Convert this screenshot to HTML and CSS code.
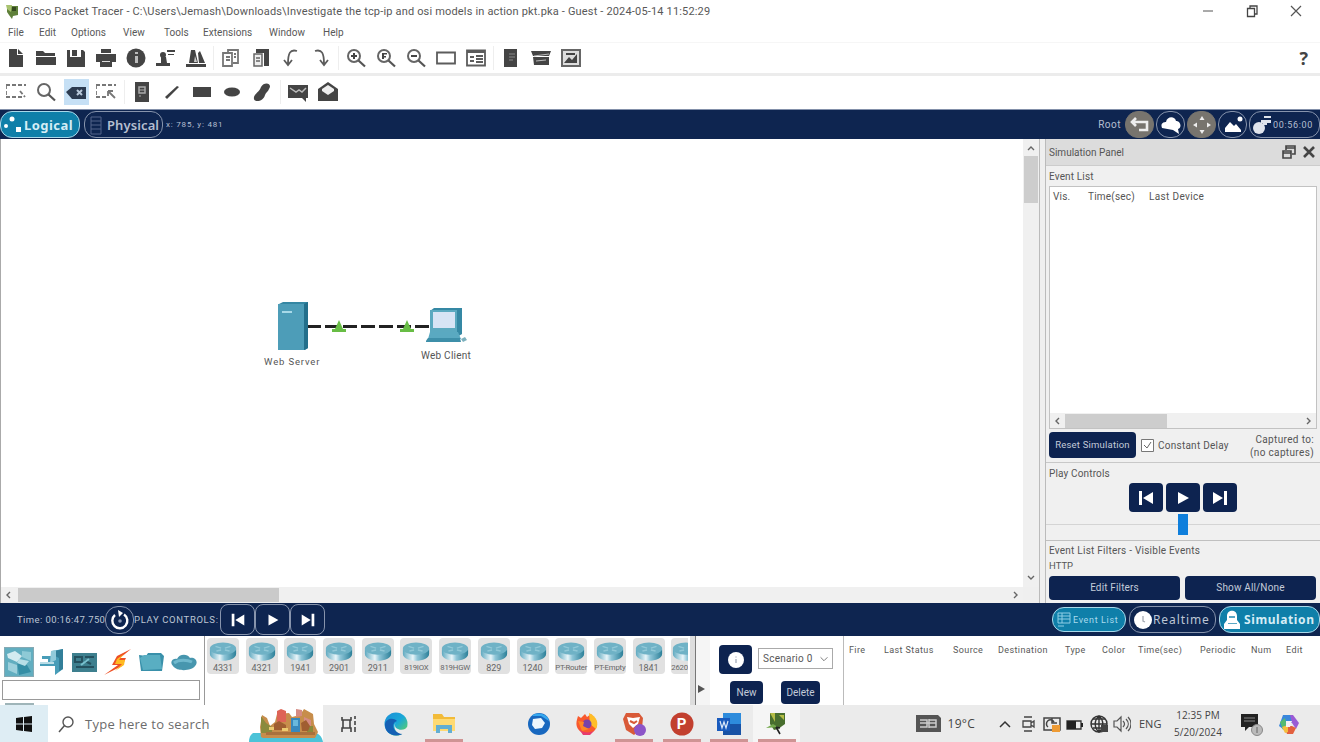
FILE: index.html
```html
<!DOCTYPE html>
<html lang="en">
<head>
<meta charset="utf-8">
<title>Cisco Packet Tracer</title>
<link rel="stylesheet" href="styles.css">
</head>
<body>
<svg class="defs" width="0" height="0">
  <defs>
    <linearGradient id="rt" x1="0" x2="1"><stop offset="0" stop-color="#5fa9c0"/><stop offset=".38" stop-color="#e9f5f9"/><stop offset=".55" stop-color="#8fc6d8"/><stop offset="1" stop-color="#2c8099"/></linearGradient>
    <linearGradient id="edge" x1="0" x2="1" y2="1"><stop offset="0" stop-color="#1c8fd8"/><stop offset=".5" stop-color="#1aa8d8"/><stop offset="1" stop-color="#6edb4a"/></linearGradient>
    <symbol id="router" viewBox="0 0 32 22"><path d="M2 9v5c0 10 28 10 28 0V9z" fill="url(#rt)"/><ellipse cx="16" cy="8.500" rx="14" ry="6.500" fill="#6fb2c6"/><path d="M8 6l6 2M24 6l-6 2M9 11l5-1M23 11l-5-1" stroke="#92c9d8" stroke-width="1.500"/></symbol>
    <symbol id="prev" viewBox="0 0 20 20"><path d="M3 3h3v14H3zM17 4v12L7 10z" fill="#fff"/></symbol>
    <symbol id="play" viewBox="0 0 20 20"><path d="M5 4l11 6-11 6z" fill="#fff"/></symbol>
    <symbol id="next" viewBox="0 0 20 20"><path d="M14 3h3v14h-3zM3 4v12l10-6z" fill="#fff"/></symbol>
    <symbol id="lens" viewBox="0 0 20 20"><circle cx="8" cy="8" r="6" fill="none" stroke="#666" stroke-width="2"/><path d="M12.500 12.500l6.500 6" stroke="#555" stroke-width="2.200"/></symbol>
  </defs>
</svg>
<div class="window">
  <header class="titlebar">
    <svg class="logo" width="16" height="16" viewBox="0 0 16 16"><path d="M3 2h11v9l-5 1-1 3-3-4-2-3z" fill="#5f803a"/><path d="M2 1h6l-1 7-4-3z" fill="#a8c270"/><path d="M8 3h4v4H8z" fill="#34491f"/></svg>
    <span class="title">Cisco Packet Tracer - C:\Users\Jemash\Downloads\Investigate the tcp-ip and osi models in action pkt.pka - Guest - 2024-05-14 11:52:29</span>
    <div class="winbtns">
      <svg viewBox="0 0 14 14"><path d="M2 7h10" stroke="#555"/></svg>
      <svg viewBox="0 0 14 14"><path d="M2.500 4.500h7v8h-7zM5 4V2h7v8h-2" fill="none" stroke="#444" stroke-width="1.300"/></svg>
      <svg viewBox="0 0 14 14"><path d="M2 2l10 10M12 2L2 12" stroke="#555" stroke-width="1.200"/></svg>
    </div>
  </header>
  <nav class="menu"><span>File</span><span>Edit</span><span>Options</span><span>View</span><span>Tools</span><span>Extensions</span><span>Window</span><span>Help</span></nav>

  <div class="tools first">
    <i><svg viewBox="0 0 20 20"><path d="M3 1h8v6h6v12H3z"/><path d="M12 1l5 5h-5z"/></svg></i>
    <i><svg viewBox="0 0 20 20"><path d="M0 3h7l2 2h10v3H0zM0 9h20v8H0z"/></svg></i>
    <i><svg viewBox="0 0 20 20"><path d="M1 2h3v7h11V2h2l2 2v15H1z"/><path d="M6 2h5v6H6z"/></svg></i>
    <i><svg viewBox="0 0 20 20"><path d="M5 1h10v4H5zM0 6h20v8H0zM4 13h12v6H4z"/><path d="M6 13h8v1H6z" fill="#ddd"/></svg></i>
    <i><svg viewBox="0 0 20 20"><circle cx="10" cy="10" r="9.500"/><path d="M9 8h3v7H9zM9 4h3v2H9z" fill="#bbb"/></svg></i>
    <i><svg viewBox="0 0 20 20"><circle cx="7" cy="7" r="3"/><path d="M5 9h5l1 6h3v3H0v-3h5zM11 2h8v2h-8zM12 6h6v1h-6z"/></svg></i>
    <i><svg viewBox="0 0 20 20"><path d="M0 16h20v3H0zM3 15L5 2h4l3 13zM12 5l2-2 5 12h-6z"/><path d="M9 8l2 6H8z" fill="#ccc"/></svg></i>
    <b></b>
    <i><svg viewBox="0 0 20 20" class="line soft"><path d="M2 5h9v13H2zM7 5V2h10v13h-5M5 9h4M5 12h4M13 6h2M13 9h2"/></svg></i>
    <i><svg viewBox="0 0 20 20"><path d="M5 1h13v17h-5V5H5z"/><path d="M3 6h8v12H3zM5 10h4M5 13h4" fill="#eee" stroke="#666" stroke-width="1.500"/></svg></i>
    <i><svg viewBox="0 0 20 20" class="line"><path d="M16 3C9 1 7 5 7 16M3 12l4 5 4-5"/></svg></i>
    <i><svg viewBox="0 0 20 20" class="line"><path d="M4 3c7-2 9 2 9 13M9 12l4 5 4-5"/></svg></i>
    <b></b>
    <i><svg viewBox="0 0 20 20"><use href="#lens"/><path d="M5 7h6v2H5zM7 5h2v6H7z"/></svg></i>
    <i><svg viewBox="0 0 20 20"><use href="#lens"/><path d="M6 5h2v6H6zM8 5h3v1.500H8zM8 8h2v1.500H8z"/></svg></i>
    <i><svg viewBox="0 0 20 20"><use href="#lens"/><path d="M5 7h6v2H5z"/></svg></i>
    <i><svg viewBox="0 0 20 20" class="line"><path d="M1 4.500h18v11H1z"/></svg></i>
    <i><svg viewBox="0 0 20 20" class="line"><path d="M1 2.500h18v15H1zM1 4h18"/><path d="M4 9h4M4 13h4M10 8h7M10 11h7M10 14h7"/></svg></i>
    <b></b>
    <i><svg viewBox="0 0 20 20"><path d="M3 1h13v18H3z"/><path d="M8 6h6M8 9h6M8 12h4" stroke="#888"/></svg></i>
    <i><svg viewBox="0 0 20 20"><path d="M0 3h20l-2 5H2zM2 9h16v8H3z"/><path d="M3 8l15-2M5 13l10-1" stroke="#bbb"/></svg></i>
    <i><svg viewBox="0 0 20 20"><path d="M1 2h18v16H1z" fill="#ddd" stroke="#666" stroke-width="2"/><path d="M3 15l5-6 3 3 5-6v9zM5 5h9v2H5z"/></svg></i>
    <span class="help">?</span>
  </div>
  <div class="tools second">
    <i><svg viewBox="0 0 20 20" class="line soft"><path d="M0 3h20M0 3v12M0 15h16M14 9l5 6" stroke-dasharray="4 2"/></svg></i>
    <i><svg viewBox="0 0 20 20"><use href="#lens"/></svg></i>
    <i class="sel"><svg viewBox="0 0 20 20"><path d="M0 10l6-5h14v12H6z" fill="#2c3b50"/><path d="M11 8l5 5M16 8l-5 5" stroke="#b9c9da" stroke-width="2"/></svg></i>
    <i><svg viewBox="0 0 20 20" class="line soft"><path d="M0 3h20M0 3v12h11" stroke-dasharray="4 2"/><path d="M12 9l7 7M12 9v5M12 9h5"/></svg></i>
    <b></b>
    <i><svg viewBox="0 0 20 20"><path d="M3 0h14v20H3z"/><path d="M7 5h6v6H7z" fill="none" stroke="#aaa" stroke-width="1.500"/><path d="M7 8h6M7 14h2" stroke="#aaa"/></svg></i>
    <i><svg viewBox="0 0 20 20"><path d="M3 15L15 4l2 1L5 17z"/></svg></i>
    <i><svg viewBox="0 0 20 20"><path d="M1 5h18v10H1z"/></svg></i>
    <i><svg viewBox="0 0 20 20"><ellipse cx="10" cy="10" rx="8" ry="4.500"/></svg></i>
    <i><svg viewBox="0 0 20 20"><path d="M9 5c3-6 12-4 8 2-1 3-3 3-4 6-1 6-10 8-11 4-1-5 5-6 7-12z"/></svg></i>
    <b></b>
    <i><svg viewBox="0 0 20 20"><path d="M0 3h20v13h-2v4l-4-4H0z"/><path d="M2 6l6 4 3-2 3 2 4-4" fill="none" stroke="#bbb" stroke-width="1.500"/></svg></i>
    <i><svg viewBox="0 0 20 20"><path d="M0 7l10-7 10 7v12H0z"/><path d="M4 7l6-4 6 4v2l-6 4-6-4z" fill="#eee"/></svg></i>
  </div>

  <div class="viewbar">
    <div class="pill logical on"><svg width="20" height="20" viewBox="0 0 20 20" fill="#fff"><circle cx="4" cy="11" r="2"/><circle cx="10" cy="4" r="2.500"/><path d="M14 12h5v5h-5z"/></svg><span>Logical</span></div>
    <div class="pill physical"><svg width="17" height="20" viewBox="0 0 17 20"><path d="M5 2h10v17H5zM5 6h10M5 10h10M5 14h10" fill="none" stroke="#52658a"/></svg><span>Physical</span></div>
    <span class="xy">x: 785, y: 481</span>
    <span class="root">Root</span>
    <i class="rnd gray"><svg viewBox="0 0 20 20"><path d="M6 3L2 7l4 4M2 7h15v8H9" fill="none" stroke="#eee" stroke-width="2.600"/></svg></i>
    <i class="rnd"><svg viewBox="0 0 20 20"><path d="M1 13c-2-5 2-6 4-6 1-6 9-6 10-1 5 0 6 7 2 8l1 5-6-4z" fill="#fff"/></svg></i>
    <i class="rnd gray"><svg viewBox="0 0 20 20"><path d="M10 1l2.500 4h-5zM10 19l2.500-4h-5zM1 10l4-2.500v5zM19 10l-4-2.500v5z" fill="#eee"/></svg></i>
    <i class="rnd"><svg viewBox="0 0 20 20"><path d="M2 17v-4l5-6 4 4 2-2 5 6v2z" fill="#fff"/><circle cx="17" cy="4" r="2.500" fill="#fff"/></svg></i>
    <div class="pill clock"><svg width="20" height="20" viewBox="0 0 20 20" fill="#dfe4ec"><circle cx="7" cy="13" r="6"/><path d="M9 5h10v3H9zM12 1h7v2h-7zM11 7h4v3h-4z"/></svg><span>00:56:00</span></div>
  </div>

  <main class="main">
    <section class="workspace">
      <div class="canvas">
        <svg class="cable" width="122" height="16" viewBox="0 0 122 16"><path d="M0 7.500h122" stroke="#222" stroke-width="3" stroke-dasharray="14 4"/><path d="M25 13h14v-3h-3l-4-9-4 9h-3zM93 13h14v-3h-3l-4-9-4 9h-3z" fill="#68bd45"/></svg>
        <svg class="server" width="33" height="50" viewBox="0 0 33 50"><path d="M2 3l4-2h25v46l-3 2H2z" fill="#3587a3"/><path d="M1 3h26v46H1z" fill="#4d9db8"/><path d="M27 3l4-2v46l-4 2z" fill="#236f8b"/><path d="M5 11h10" stroke="#a8d9e8" stroke-width="2"/></svg>
        <svg class="pc" width="42" height="38" viewBox="0 0 42 38"><path d="M4 4l4-3h28v26l-5 3H4z" fill="#3588a4"/><path d="M4 3h27v22H4z" fill="#5ba9c0"/><path d="M7 5h22v16H7z" fill="#d7e4f5"/><path d="M4 25h28l3 7H2z" fill="#5aa9c1"/><path d="M2 31h32l1 4H-1z" fill="#3e8fa9"/><path d="M35 32l4-2 2 3-4 2z" fill="#7cb0bd"/></svg>
        <span class="lbl srv">Web Server</span>
        <span class="lbl cli">Web Client</span>
      </div>
      <div class="vscroll"><svg viewBox="0 0 14 14"><path d="M4 9l3-3 3 3" class="chev"/></svg><div class="vthumb"></div><svg class="end" viewBox="0 0 14 14"><path d="M4 5l3 3 3-3" class="chev"/></svg></div>
      <div class="hscroll"><svg viewBox="0 0 14 14"><path d="M8 4L5 7l3 3" class="chev"/></svg><div class="hthumb"></div><svg class="end" viewBox="0 0 14 14"><path d="M5 4l3 3-3 3" class="chev"/></svg></div>
    </section>
    <aside class="panel">
      <div class="phead"><span>Simulation Panel</span>
        <svg width="14" height="14" viewBox="0 0 14 14"><path d="M1 6h8v7H1zM4 5V1h9v8h-3M1 8h8M4 3h9" fill="none" stroke="#444" stroke-width="1.600"/></svg>
        <svg width="14" height="14" viewBox="0 0 14 14"><path d="M2 2l10 10M12 2L2 12" stroke="#444" stroke-width="2.600"/></svg>
      </div>
      <div class="ptitle">Event List</div>
      <div class="events">
        <div class="ehead"><span>Vis.</span><span>Time(sec)</span><span class="ld">Last Device</span></div>
        <div class="escroll"><svg viewBox="0 0 14 14"><path d="M8 4L5 7l3 3" class="chev"/></svg><div></div><svg class="end" viewBox="0 0 14 14"><path d="M5 4l3 3-3 3" class="chev"/></svg></div>
      </div>
      <div class="reset">
        <button class="navy">Reset Simulation</button>
        <svg width="13" height="13" viewBox="0 0 13 13"><path d="M.5.5h12v12H.5z" fill="#fff" stroke="#777"/><path d="M3 6l3 3 4-6" fill="none" stroke="#666"/></svg>
        <span class="cd">Constant Delay</span>
        <span class="cap">Captured to:<br>(no captures)</span>
      </div>
      <div class="pc-title">Play Controls</div>
      <div class="pbtns">
        <button class="navy"><svg viewBox="0 0 20 20"><use href="#prev"/></svg></button>
        <button class="navy"><svg viewBox="0 0 20 20"><use href="#play"/></svg></button>
        <button class="navy"><svg viewBox="0 0 20 20"><use href="#next"/></svg></button>
      </div>
      <div class="slider"><div></div></div>
      <div class="filters"><p class="vis">Event List Filters - Visible Events</p><p class="http">HTTP</p>
        <div class="fb"><button class="navy">Edit Filters</button><button class="navy">Show All/None</button></div>
      </div>
    </aside>
  </main>

  <div class="timebar">
    <span class="time">Time: 00:16:47.750</span>
    <i class="rnd"><svg viewBox="0 0 20 20"><path d="M5 5a7.500 7.500 0 1 0 9-.5" fill="none" stroke="#fff" stroke-width="2.400"/><path d="M8 0l5 3-4 4z" fill="#fff"/><circle cx="10" cy="11" r="1.800" fill="#8c9ab5"/></svg></i>
    <span class="pctext">PLAY CONTROLS:</span>
    <div class="ctl"><i><svg viewBox="0 0 20 20"><use href="#prev"/></svg></i><i><svg viewBox="0 0 20 20"><use href="#play"/></svg></i><i><svg viewBox="0 0 20 20"><use href="#next"/></svg></i></div>
    <div class="pill ev on"><svg width="16" height="16" viewBox="0 0 16 16"><path d="M2 1h12v10H2zM2 4h12M2 7h12M6 1v10M2 14h6" fill="none" stroke="#8fcfe6"/></svg><span>Event List</span></div>
    <div class="pill real"><svg width="20" height="20" viewBox="0 0 20 20"><circle cx="10" cy="10" r="9" fill="#fff"/><path d="M10 6v5l2 1" fill="none" stroke="#a5aab3" stroke-width="1.300"/></svg><span>Realtime</span></div>
    <div class="pill sim on"><svg width="20" height="20" viewBox="0 0 20 20"><path d="M5 10V6c0-7 10-7 10 0v4l3 4v5H2v-5z" fill="#fff"/><path d="M7 6h6v2H7zM6 13h9v1H6z" fill="#5aa7c4"/></svg><span>Simulation</span></div>
  </div>

  <div class="bottom">
    <section class="cats">
      <div class="caticons">
        <svg class="active" viewBox="0 0 28 28"><path d="M0 0h28v28H0z" fill="#62aec0"/><path d="M2 6l8-3 7 5-5 6-9-4z" fill="#d3ebf0"/><path d="M17 3l9 1v9l-9-4z" fill="#8ecad6"/><path d="M3 14l9 3v9l-9-4z" fill="#9dd0dc"/><path d="M12 14l10 3 4 7-12 3z" fill="#358ea5"/><path d="M14 11l10 2-4 5-8-3z" fill="#b8dfe7"/></svg>
        <svg viewBox="0 0 28 28"><path d="M14 3l11-2v20l-8 6v-9H2v-4h8v-3H4V8h10z" fill="#489db8"/><path d="M17 3l8-2v20l-4 2V10l-4-2z" fill="#327f99"/><path d="M13 3l5-1v10l-6 3z" fill="#91cada"/><path d="M2 14h14v2H2z" fill="#b8dce6"/></svg>
        <svg viewBox="0 0 28 28"><path d="M1 5h25v19H1z" fill="#3d7f8e"/><path d="M4 9h7v5H4zM14 9h9M14 13l6 3M5 19h18" fill="none" stroke="#24505e" stroke-width="2"/><path d="M10 17l8-6" stroke="#79c0ce" stroke-width="2"/></svg>
        <svg viewBox="0 0 28 28"><path d="M27 1L13 8l-5 9h6L0 27l18-9 4-8h-6z" fill="#ee4f24"/><path d="M20 6l-7 5-2 5h7l-7 7 9-6 1-5h-6z" fill="#ffba22"/></svg>
        <svg viewBox="0 0 28 28"><path d="M2 7l7 1 2-3h13l3 3-2 15H4z" fill="#3990aa"/><path d="M3 10l4-3h16l2 14-19 1z" fill="#59aec2"/></svg>
        <svg viewBox="0 0 28 28"><path d="M3 18c-4-4 0-8 4-7 2-5 10-6 13-1 5-1 9 4 5 8-3 5-18 6-22 0z" fill="#4796ae"/><path d="M4 15c5-4 14-3 18-1" stroke="#6fb8cd" stroke-width="3" fill="none"/></svg>
      </div>
      <div class="catbox"></div>
      <div class="cattab"></div>
    </section>
    <section class="devices">
      <div class="dev"><svg><use href="#router"/></svg><span>4331</span></div>
      <div class="dev"><svg><use href="#router"/></svg><span>4321</span></div>
      <div class="dev"><svg><use href="#router"/></svg><span>1941</span></div>
      <div class="dev"><svg><use href="#router"/></svg><span>2901</span></div>
      <div class="dev"><svg><use href="#router"/></svg><span>2911</span></div>
      <div class="dev"><svg><use href="#router"/></svg><span class="t">819IOX</span></div>
      <div class="dev"><svg><use href="#router"/></svg><span class="t">819HGW</span></div>
      <div class="dev"><svg><use href="#router"/></svg><span>829</span></div>
      <div class="dev"><svg><use href="#router"/></svg><span>1240</span></div>
      <div class="dev"><svg><use href="#router"/></svg><span class="t">PT-Router</span></div>
      <div class="dev"><svg><use href="#router"/></svg><span class="t">PT-Empty</span></div>
      <div class="dev"><svg><use href="#router"/></svg><span>1841</span></div>
      <div class="dev last"><svg><use href="#router"/></svg><span class="t">2620</span></div>
    </section>
    <section class="strip"><svg width="9" height="10" viewBox="0 0 9 10"><path d="M1 1l7 4-7 4z" fill="#555"/></svg></section>
    <section class="scenario">
      <div class="srow"><button class="navy info"><svg width="18" height="18" viewBox="0 0 18 18"><circle cx="9" cy="9" r="8" fill="#fff"/><path d="M9 8v4M9 5.500v1" stroke="#a5adba" stroke-width="1.300"/></svg></button><div class="combo"><span>Scenario 0</span><svg width="12" height="12" viewBox="0 0 14 14"><path d="M3 5l4 4 4-4" class="chev thin"/></svg></div></div>
      <div class="brow"><button class="navy">New</button><button class="navy">Delete</button></div>
    </section>
    <section class="pdu"><span>Fire</span><span>Last Status</span><span>Source</span><span>Destination</span><span>Type</span><span>Color</span><span>Time(sec)</span><span>Periodic</span><span>Num</span><span>Edit</span></section>
  </div>

  <footer class="taskbar">
    <div class="start"><svg width="16" height="16" viewBox="0 0 16 16"><path d="M0 2l7-1v6.500H0zM8 1l8-1v7.500H8zM0 8.500h7V15l-7-1zM8 8.500h8V16l-8-1z" fill="#111"/></svg></div>
    <div class="search"><svg width="18" height="18" viewBox="0 0 18 18"><circle cx="11" cy="7" r="5" fill="none" stroke="#555" stroke-width="1.400"/><path d="M7.500 10.500L2 17" stroke="#555" stroke-width="1.500"/></svg><span>Type here to search</span>
      <svg class="doodle" width="74" height="36" viewBox="0 0 74 36"><path d="M4 27h63c5 2 6 5 7 9H0c0-4 1-7 4-9z" fill="#4cc3d8"/><path d="M12 31l-1-10 2-12 5 3 3 8 5-4 2-8 12-1 3 4 8-2 4-6 9 5 1 10 4 8-3 6H14z" fill="#c78d4b"/><path d="M28 5l4-2 5 2v11h-9z" fill="#de6456"/><path d="M42 12h9v14h-9z" fill="#3789bd"/><path d="M44 14h5v6h-5z" fill="#69b9dc"/><path d="M12 10l5 7 6 4v6H12zM58 20h6v6h-6z" fill="#8a8a3c"/><path d="M47 3l6 1v6l-6 1zM55 11l7 3v6h-7z" fill="#d58b83"/><path d="M25 18l5-3 7 4v5H25zM52 17l5-3 4 6-2 5h-6z" fill="#a05e31"/><path d="M17 26h49v3H17z" fill="#a9713c"/><path d="M20 21h5v3h-5zM33 22h6v3h-6z" fill="#ecca70"/></svg>
    </div>
    <div class="apps">
      <i><svg viewBox="0 0 24 24"><path d="M5 5v3h9V5M5 20v-4h9v4M6 8v8M13 8v8M18 4v3M18 9v4M18 15v5" fill="none" stroke="#444" stroke-width="1.600"/></svg></i>
      <i><svg viewBox="0 0 24 24"><circle cx="12" cy="12" r="11.500" fill="url(#edge)"/><path d="M1 12C2 7 9 5 13 9c-5 1-5 8 0 11 2 1 6 1 8 0C14 27 0 23 1 12z" fill="#1560b4"/><path d="M12 10c-2 3-1 6 2 7 4 2 8 0 9-2l1 4-4 3c-8 1-12-7-8-12z" fill="#ebebeb"/></svg></i>
      <i class="run"><svg viewBox="0 0 24 24"><path d="M1 2h9l2 3h11v14H1z" fill="#f2bb39"/><path d="M1 7h22v12H1z" fill="#ffda72"/><path d="M4 21v-8h16v8h-4v-4H8v4z" fill="#63aed2"/></svg></i>
      <i></i>
      <i><svg viewBox="0 0 24 24"><circle cx="12" cy="12" r="11" fill="#1868bf"/><path d="M5 4c5-5 16-2 17 5l-8-5z" fill="#36a8ef"/><path d="M6 7l8-1 4 5-3 5-7 1-3-4z" fill="#edf6fc"/></svg></i>
      <i><svg viewBox="0 0 24 24"><path d="M3 4l3 2 4-4 2 3 4-3 5 6c5 13-12 18-18 9-3-5-1-9 0-13z" fill="#f9592d"/><path d="M14 1c8 4 10 10 7 16l-6-5z" fill="#ffbd28"/><circle cx="12" cy="12" r="4.500" fill="#7542a8"/><path d="M3 9l6 1-1 4 6 3-7 2z" fill="#fc8725"/><path d="M2 14c3 6 10 8 17 5l-4 4-7 0z" fill="#e73a6c"/></svg></i>
      <i class="run"><svg viewBox="0 0 24 24"><path d="M4 1h13l4 5-1 10-8 7-8-5L1 7z" fill="#d95a38"/><path d="M5 5l6 1 7-1-2 7-5 4-4-4z" fill="#fff"/><path d="M8 9l4 2 3-2" fill="none" stroke="#d95a38" stroke-width="2"/><circle cx="18" cy="18" r="6" fill="#8c55c8"/></svg></i>
      <i class="run"><svg viewBox="0 0 24 24"><circle cx="12" cy="12" r="11.500" fill="#c2402f"/></svg><em>P</em></i>
      <i class="run"><svg viewBox="0 0 24 24"><path d="M6 1h18v22H6z" fill="#2d8bdc"/><path d="M6 12h18v11H6z" fill="#1752a5"/><path d="M0 6h13v13H0z" fill="#185abd"/><path d="M3 9l2 7 2-6 2 6 2-7" fill="none" stroke="#dce8f8" stroke-width="1.200"/></svg></i>
      <i class="run cur"><svg viewBox="0 0 24 24"><path d="M5 1h15v11l-7 5-4 1-4-6z" fill="#486e2e"/><path d="M5 1h5v9zM14 3h5v5z" fill="#b4bc45"/><path d="M1 16l7-4 5 3z" fill="#73a84c"/><path d="M11 15l4 7M11 15l4 1" stroke="#222" stroke-width="1.600"/></svg></i>
    </div>
    <div class="weather"><svg width="25" height="17" viewBox="0 0 25 17"><path d="M0 0h22l3 3v14H0z" fill="#555"/><path d="M4 5h7v7H4M13 4v9M13 5h7v7h-7M4 8h16" fill="none" stroke="#ccc" stroke-width="1.500"/></svg><span>19°C</span></div>
    <div class="tray">
      <svg viewBox="0 0 18 18"><path d="M4 12l5-5 5 5" fill="none" stroke="#333" stroke-width="1.500"/></svg>
      <svg viewBox="0 0 18 18"><path d="M5 2h8M5 16h8M4 6h8v6H4zM12 8l3-2v6l-3-2" fill="none" stroke="#444" stroke-width="1.300"/></svg>
      <svg viewBox="0 0 18 18"><path d="M1 3h16v12H1zM5 12a4 4 0 1 1 6-5M9 3v5h5" fill="none" stroke="#444" stroke-width="1.500"/><path d="M9 10h8v7H9z" fill="#ee9b35"/></svg>
      <svg viewBox="0 0 18 18"><path d="M1 6h14v8H1z" fill="none" stroke="#333" stroke-width="1.300"/><path d="M1 6h9v8H1zM15 8h2v4h-2z" fill="#222"/></svg>
      <svg viewBox="0 0 18 18"><path d="M1 9h16M9 1v16M3 4h12M3 13h12M9 1c-5 4-5 12 0 16 5-4 5-12 0-16" fill="none" stroke="#333" stroke-width="1.400"/><circle cx="9" cy="9" r="8" fill="none" stroke="#333" stroke-width="1.400"/><path d="M11 10h7v7h-7z" fill="#444"/></svg>
      <svg viewBox="0 0 18 18"><path d="M1 6h3l4-4v14l-4-4H1zM10 6c2 2 2 4 0 6M13 4c3 3 3 7 0 10M15 2c4 4 4 10 0 14" fill="none" stroke="#555" stroke-width="1.200"/></svg>
    </div>
    <span class="lang">ENG</span>
    <span class="when">12:35 PM<br>5/20/2024</span>
    <svg class="notif" width="26" height="24" viewBox="0 0 26 24"><path d="M1 2h17v13H9l-4 4v-4H1z" fill="#222"/><path d="M4 6h11M4 9h11" stroke="#888"/><circle cx="17" cy="18" r="5.500" fill="#bbb" stroke="#888"/><path d="M17 15v6" stroke="#666"/></svg>
    <svg class="copilot" width="20" height="22" viewBox="0 0 20 22"><path d="M4 2h9l3 8H8l-4 6-4-3z" fill="#3a87dc"/><path d="M11 2h3l6 8-3 6-4-6z" fill="#9a5bd5"/><path d="M1 9l5-4 2 9-4 3z" fill="#56ba71"/><path d="M5 13h8l4 2-3 6H8z" fill="#e3603e"/><path d="M3 14l6-2v7l-3 1z" fill="#f5be3d"/><path d="M7 8h6l-2 6H7z" fill="#f6eef4"/></svg>
  </footer>
</div>
</body>
</html>
```

FILE: styles.css
```css
* { box-sizing: border-box; }
body { margin: 0; background: #fff; font: 10px/12px Roboto, "Open Sans", sans-serif; color: #585858; }
.window { width: 1320px; height: 742px; overflow: hidden; display: flex; flex-direction: column; }
.window span, .window button { white-space: nowrap; }
.window > * { flex-shrink: 0; }
.defs { display: block; height: 0; }
svg { display: block; flex-shrink: 0; }
i, em { font-style: normal; }
.chev { fill: none; stroke: #666; stroke-width: 1.400; }
.thin { stroke-width: 1; }
button { margin: 0; padding: 0; border: 0; font: inherit; }
.navy { background: #0d2350; color: #c3cbd9; border-radius: 4px; display: flex; align-items: center; justify-content: center; }

.titlebar { height: 24px; display: flex; align-items: center; padding-left: 4px; }
.title { margin-left: 3px; font-size: 11px; letter-spacing: .17px; }
.winbtns { margin-left: auto; display: flex; gap: 30px; padding: 0 17px 3px 0; }
.winbtns svg { width: 14px; height: 14px; }
.menu { height: 18px; display: grid; grid-template-columns: 31px 32px 52px 41px 39px 66px 54px 40px; padding: 3px 0 0 8px; font-size: 10px; letter-spacing: .05px; }

.tools { display: flex; align-items: center; padding-left: 1px; }
.tools i { width: 30px; height: 26px; display: flex; align-items: center; justify-content: center; }
.tools svg { width: 20px; height: 20px; fill: #444; }
.tools .line { fill: none; stroke: #5c5c5c; stroke-width: 1.800; }
.tools .soft { stroke: #777; }
.tools b { width: 1px; height: 24px; margin: 0 2px; background: #eee; }
.first { height: 34px; border-bottom: 3px solid #ececec; border-top: 1px solid #f6f6f6; }
.second { height: 33px; padding-bottom: 1px; }
.second b { margin: 0 2px 0 3px; }
.second .sel { background: linear-gradient(90deg, transparent 3px, #c6e0f5 3px, #c6e0f5 28px, transparent 28px); }
.help { margin-left: auto; padding-right: 12px; font: bold 18px/20px "Open Sans", sans-serif; color: #444; }

.viewbar { height: 30px; background: #0e2550; border-top: 1px solid #8390aa; display: flex; align-items: center; color: #b5bfd0; }
.pill { display: flex; align-items: center; border: 1px solid #8794ac; border-radius: 12px; height: 27px; overflow: hidden; }
.pill.on { background: #0f7fa9; border-color: #a9d8e9; color: #d5edf6; }
.logical { width: 80px; padding-left: 1px; }
.logical span, .physical span { font: bold 13px/16px "Noto Sans", sans-serif; letter-spacing: .45px; }
.logical span { margin-left: 2px; }
.physical { margin-left: 4px; width: 79px; padding-left: 1px; }
.physical span { font-weight: 600; margin-left: 4px; letter-spacing: .1px; }
.xy { margin-left: 3px; font-size: 8px; letter-spacing: .8px; }
.root { margin-left: auto; margin-right: 4px; letter-spacing: .5px; }
.rnd { width: 29px; height: 27px; border: 1px solid #8794ac; border-radius: 13px; display: flex; align-items: center; justify-content: center; }
.rnd svg { width: 20px; height: 20px; }
.viewbar .rnd { margin-right: 2px; }
.gray { background: #77746e; border-color: #77746e; }
.clock { width: 71px; padding-left: 2px; }
.clock span { font-size: 9px; margin-left: 1px; letter-spacing: .65px; }

.main { height: 464px; display: flex; background: #efefef; }
.workspace { width: 1040px; display: grid; grid-template: 448px 16px / 1022px 16px; border-left: 1px solid #aaa; border-right: 1px solid #bbb; }
.canvas { background: #fff; position: relative; }
.server { position: absolute; left: 276px; top: 162px; }
.cable { position: absolute; left: 306px; top: 180px; }
.pc { position: absolute; left: 425px; top: 168px; }
.lbl { position: absolute; color: #555; }
.srv { left: 263px; top: 217px; letter-spacing: .85px; font-size: 9.500px; }
.cli { left: 420px; top: 211px; letter-spacing: .25px; }
.vscroll { display: flex; flex-direction: column; align-items: center; background: #f0f0f0; padding-top: 2px; }
.vscroll svg, .hscroll svg, .escroll svg { width: 14px; height: 14px; }
.vscroll .end { margin-top: auto; margin-bottom: 2px; }
.vthumb { width: 14px; height: 47px; margin-top: 1px; background: #cdcdcd; }
.hscroll { display: flex; align-items: center; background: #f0f0f0; padding-left: 1px; }
.hthumb { width: 261px; height: 14px; background: #cacaca; margin-left: 2px; }
.hscroll .end { margin-left: auto; }

.panel { margin-left: 5px; width: 275px; border-left: 1px solid #bbb; background: #f0f0f0; color: #555; }
.phead { height: 27px; background: #dcdcdc; border-bottom: 1px solid #ccc; display: flex; align-items: center; padding: 0 4px 0 3px; gap: 6px; }
.phead span { margin-right: auto; padding-top: 1px; }
.ptitle { height: 20px; padding: 5px 0 0 3px; letter-spacing: .15px; }
.events { margin: 0 3px; width: 268px; height: 243px; border: 1px solid #c2c2c2; background: #fff; display: flex; flex-direction: column; }
.ehead { display: grid; grid-template-columns: 35px 61px 1fr; padding: 4px 0 0 3px; letter-spacing: .2px; }
.ld { letter-spacing: .35px; }
.escroll { margin-top: auto; height: 15px; background: #f0f0f0; display: flex; align-items: center; padding-left: 1px; }
.escroll div { width: 102px; height: 14px; background: #cdcdcd; }
.escroll .end { margin-left: auto; }
.reset { height: 34px; display: flex; align-items: center; padding: 0 6px 1px 3px; border-bottom: 1px solid #c8c8c8; }
.reset .navy { width: 87px; height: 26px; font-size: 9.500px; letter-spacing: .2px; }
.reset svg { margin: 0 4px 0 5px; }
.cd { letter-spacing: .25px; padding-top: 1px; }
.cap { margin-left: auto; text-align: right; line-height: 13.500px; letter-spacing: .35px; padding-top: 2px; }
.pc-title { padding: 5px 3px 0; height: 20px; letter-spacing: .15px; }
.pbtns { display: flex; justify-content: center; gap: 3px; height: 30px; padding-right: 1px; }
.pbtns .navy { width: 34px; height: 29px; }
.pbtns svg { width: 20px; height: 20px; }
.slider { height: 28px; display: flex; justify-content: center; background: linear-gradient(#d4d4d4, #d4d4d4) 0 11px / 100% 1px no-repeat; border-bottom: 1px solid #c0c0c0; padding: 1px 1px 0 0; }
.slider div { width: 10px; height: 21px; background: #0f7fdc; }
.filters { padding: 4px 3px 0; }
.filters p { margin: 0; }
.vis { height: 15px; letter-spacing: .24px; }
.http { height: 16px; font-size: 9.500px; }
.fb { display: flex; gap: 5px; }
.fb .navy { width: 131px; height: 24px; letter-spacing: .15px; }

.timebar { height: 33px; background: #0e2550; display: flex; align-items: center; color: #bcc5d4; }
.time { width: 88px; margin-left: 17px; font-size: 9.500px; letter-spacing: .4px; }
.timebar .rnd { height: 28px; }
.pctext { width: 86px; padding-left: 0; font-size: 9.500px; letter-spacing: .65px; }
.ctl { display: flex; }
.ctl i { width: 35px; height: 31px; border: 1px solid #8794ac; border-radius: 8px; display: flex; align-items: center; justify-content: center; }
.ctl svg { width: 18px; height: 18px; }
.ev { margin-left: auto; width: 74px; height: 25px; padding-left: 3px; }
.timebar .ev { color: #a9dbee; }
.ev span { font-size: 9px; margin-left: 1px; letter-spacing: .65px; }
.real { margin-left: 3px; width: 87px; padding-left: 3px; }
.real span { font: 12px/16px "Noto Sans", sans-serif; letter-spacing: .9px; }
.sim { margin-left: 3px; width: 101px; padding-left: 2px; }
.sim span { font: bold 12px/16px "Noto Sans", sans-serif; margin-left: 2px; letter-spacing: .6px; }

.bottom { height: 69px; display: flex; background: #fff; }
.cats { width: 205px; border-right: 1px solid #999; }
.caticons { display: flex; gap: 5px; padding: 12px 0 0 5px; height: 44px; }
.caticons svg { width: 28px; height: 28px; }
.active { outline: 1px solid #85a9b3; }
.catbox { margin-left: 2px; width: 198px; height: 20px; border: 1px solid #999; }
.cattab { margin: 3px 0 0 5px; width: 29px; height: 2px; background: #9fb5b9; }
.devices { width: 485px; padding: 2px 0 0 2px; display: flex; gap: 6.700px; overflow: hidden; }
.dev { flex: 0 0 32px; height: 36px; background: #e1e1e1; border-radius: 4px; padding-top: 2px; display: flex; flex-direction: column; align-items: center; color: #666; }
.dev svg { width: 30px; height: 22px; }
.dev span { font-size: 9px; line-height: 12px; }
.dev .t { font-size: 7.800px; letter-spacing: -.2px; }
.last { flex-basis: 17px; overflow: hidden; align-items: flex-start; border-radius: 4px 0 0 4px; }
.strip { width: 22px; display: flex; align-items: flex-end; padding: 0 0 11px 7px; background: linear-gradient(90deg, #ddd 5px, #777 5px, #777 6px, #f5f5f5 6px, #f5f5f5 20px, #fff 20px); }
.scenario { width: 132px; border-right: 1px solid #bbb; display: flex; flex-direction: column; }
.srow { display: flex; padding: 9px 0 0 7px; height: 45px; }
.info { width: 33px; height: 29px; }
.combo { margin: 3px 0 0 6px; width: 75px; height: 21px; border: 1px solid #aaa; display: flex; align-items: center; justify-content: space-between; padding: 0 2px 0 4px; }
.combo span { letter-spacing: .25px; }
.brow { display: flex; gap: 18px; padding-left: 18px; }
.brow .navy { width: 33px; height: 23px; }
.brow .navy + .navy { width: 39px; }
.pdu { display: grid; grid-template-columns: 35px 69px 45px 67px 37px 36px 62px 51px 35px 25px; padding: 8px 0 0 5px; font-size: 9px; letter-spacing: .4px; align-items: start; }

.taskbar { height: 37px; background: #ebebeb; display: flex; align-items: center; color: #444; }
.start { width: 48px; height: 37px; background: #deedf4; display: flex; align-items: center; justify-content: center; }
.search { width: 275px; height: 37px; background: #fff; display: flex; align-items: center; padding-left: 9px; }
.search span { margin-left: 10px; font: 13px/18px "Open Sans", sans-serif; letter-spacing: .27px; color: #6c6c6c; }
.doodle { margin-left: auto; align-self: flex-end; }
.apps { display: flex; align-self: stretch; padding-left: 2px; }
.apps i { width: 47.550px; display: flex; align-items: center; justify-content: center; position: relative; }
.apps svg { width: 24px; height: 24px; }
.apps em { position: absolute; font: bold 15px/24px Roboto, sans-serif; color: #fff; }
.apps .run { background: linear-gradient(#cf9494, #cf9494) center bottom / 38px 3px no-repeat; }
.apps .cur { background-color: #f5f5f5; }
.weather { margin-left: auto; display: flex; align-items: center; gap: 7px; width: 80px; font: 12px/16px "Open Sans", sans-serif; letter-spacing: .3px; }
.tray { display: flex; gap: 5.500px; }
.tray svg { width: 18px; height: 18px; }
.lang { margin-left: 8px; width: 35px; font: 11px/16px "Open Sans", sans-serif; }
.when { width: 52px; text-align: center; font: 10px/17px "Open Sans", sans-serif; letter-spacing: .05px; position: relative; left: -2px; }
.notif { margin-left: 14px; }
.copilot { margin: 0 21px 0 13px; }
```
